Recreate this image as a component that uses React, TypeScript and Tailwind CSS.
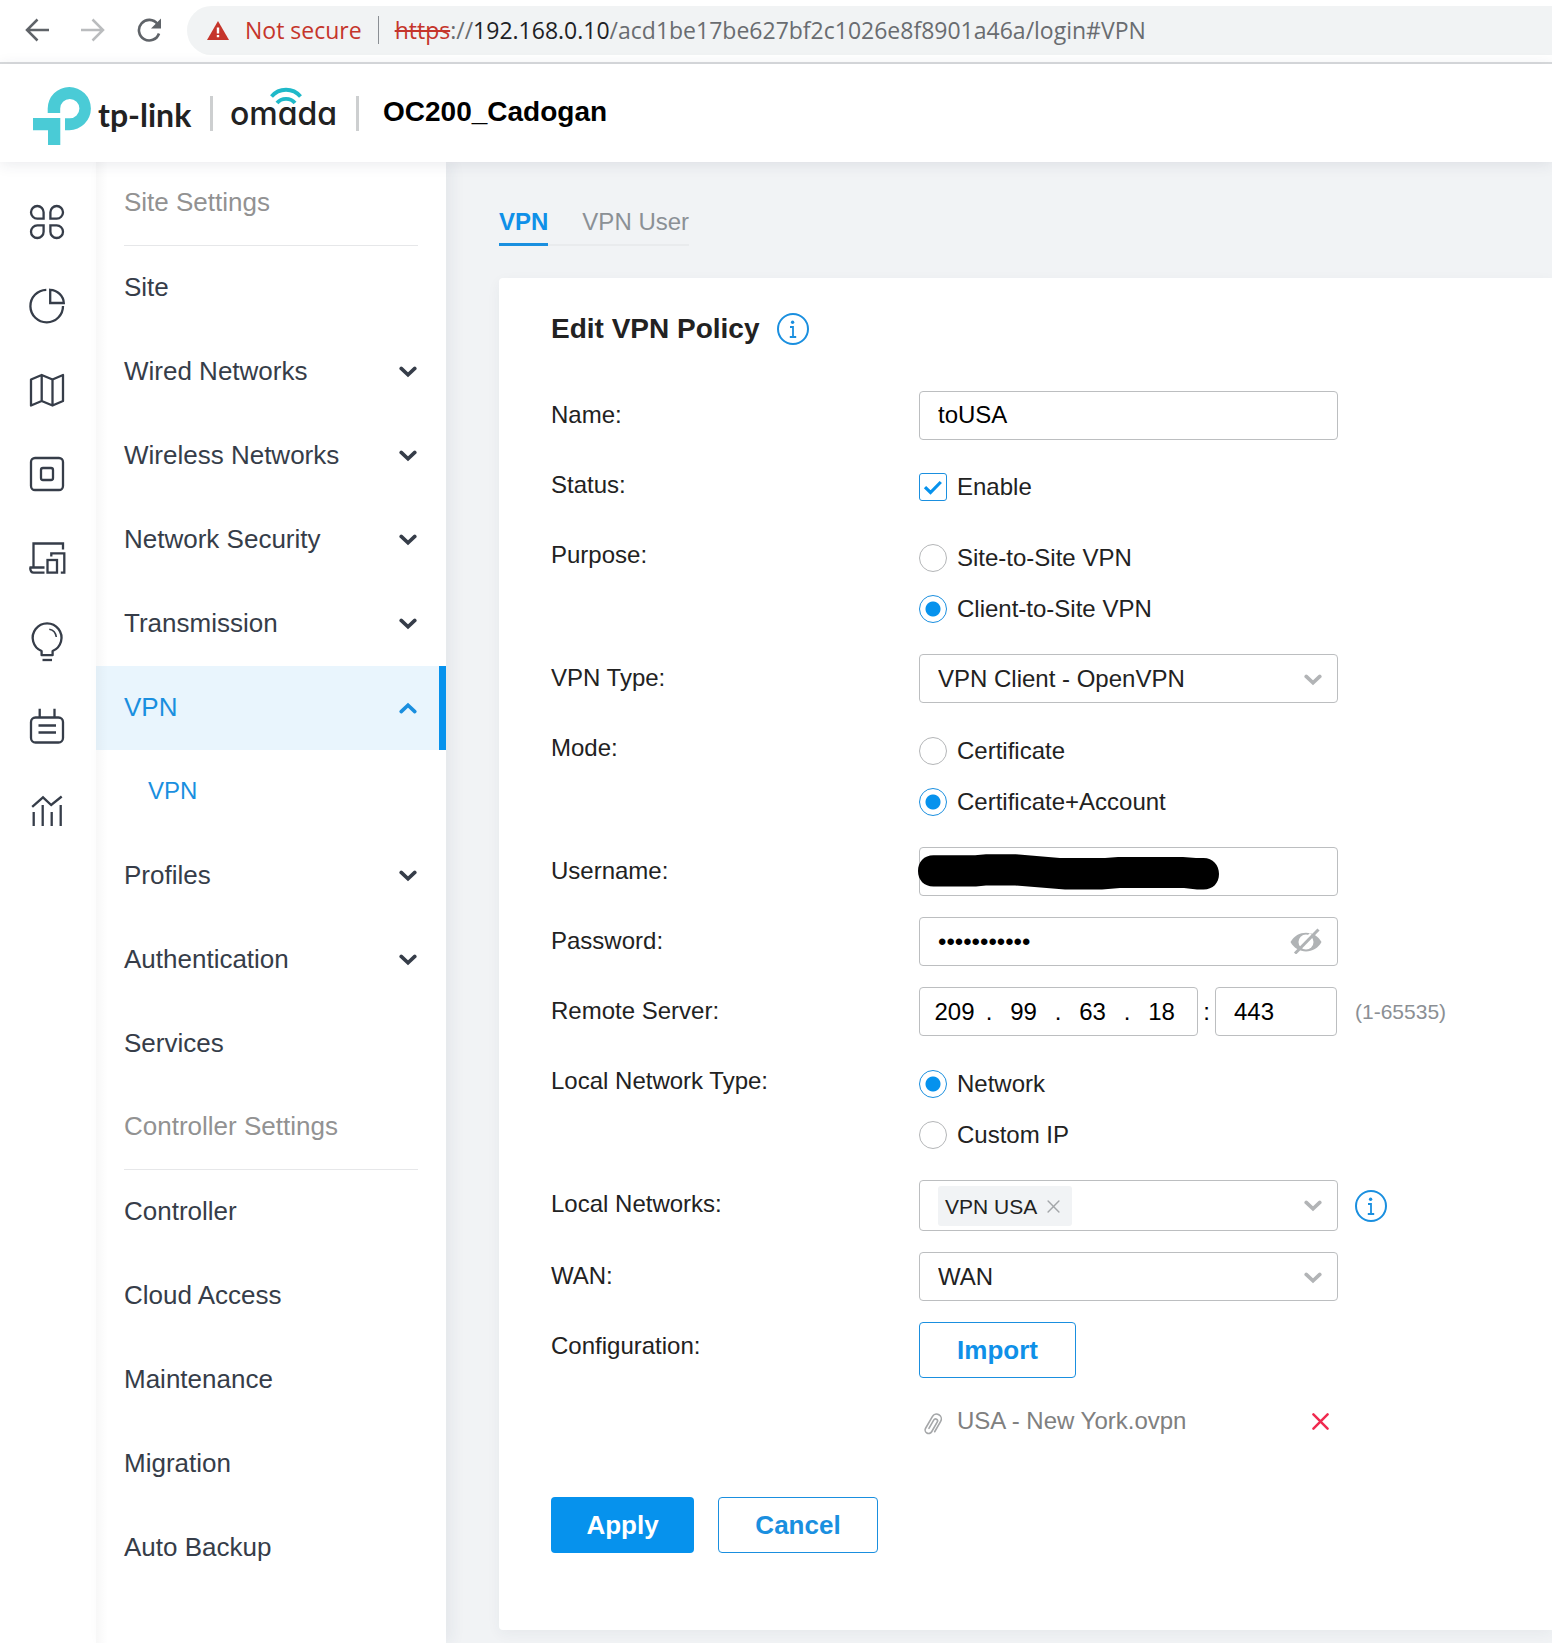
import React, { useState } from "react";

type IconProps = { className?: string };

function Chevron({ className = "" }: IconProps) {
  return (
    <svg viewBox="0 0 18 12" className={`h-3 w-[18px] ${className}`} fill="none" stroke="currentColor" strokeWidth="3.6" strokeLinecap="round" aria-hidden="true">
      <path d="M2.200 2.400 9 8.800l6.800-6.400" strokeLinejoin="miter" />
    </svg>
  );
}

function InfoIcon() {
  return (
    <svg viewBox="0 0 32 32" className="h-8 w-8" fill="none" stroke="#1a8fdf" strokeWidth="2" aria-hidden="true">
      <circle cx="16" cy="16" r="15" />
      <circle cx="15.600" cy="9.300" r="1.700" fill="#1a8fdf" stroke="none" />
      <path d="M13 14h3v9.800M12.800 24h6.400" strokeWidth="1.800" />
    </svg>
  );
}

function CloseIcon({ className = "" }: IconProps) {
  return (
    <svg viewBox="0 0 18 18" className={className} fill="none" stroke="currentColor" strokeLinecap="round" aria-hidden="true">
      <path d="M1.5 1.5l15 15M16.5 1.5l-15 15" />
    </svg>
  );
}

const petal = "M14.6 14.6H8.3A6.3 6.3 0 1 1 14.6 8.3Z";

const railIcons: { label: string; art: React.ReactNode }[] = [
  {
    label: "Dashboard",
    art: (
      <>
        <path d={petal} />
        <path d={petal} transform="translate(36 0) scale(-1 1)" />
        <path d={petal} transform="translate(0 36) scale(1 -1)" />
        <path d={petal} transform="translate(36 36) scale(-1 -1)" />
      </>
    ),
  },
  {
    label: "Statistics",
    art: (
      <>
        <path d="M17.3 1.8A16.3 16.3 0 1 0 34 18" />
        <path d="M21.2 1.8V15h13.6C34.5 8 28.500 2 21.200 1.800Z" />
      </>
    ),
  },
  {
    label: "Map",
    art: <path d="M2 7.500 12.700 3l10.800 4.500L34 3v26l-10.500 4.500L12.700 29 2 33.500ZM12.700 3v26M23.500 7.500v26" strokeLinejoin="round" />,
  },
  {
    label: "Devices",
    art: (
      <>
        <rect x="2" y="2" width="32" height="32" rx="4" />
        <rect x="12" y="12" width="12" height="12" rx="2" />
      </>
    ),
  },
  {
    label: "Clients",
    art: (
      <>
        <path d="M34 9.500V3.500H4.500v24M0.500 27.500h15M1.200 27.500c0 3.500 1 5.200 3.500 5.200h10.800" />
        <path d="M22.300 16.500v-3.200h13v19.300h-3.500" />
        <rect x="18.500" y="20" width="9.500" height="12.600" />
      </>
    ),
  },
  {
    label: "Insight",
    art: (
      <>
        <path d="M12.600 31.200V27A14.400 14.400 0 1 1 23.600 27v4.200Z" strokeLinejoin="round" />
        <path d="M13.500 36h9.500" />
        <path d="M20.300 5.200c4 .8 6.500 3.600 7 7.800" strokeWidth="1.600" />
      </>
    ),
  },
  {
    label: "Log",
    art: (
      <>
        <rect x="2" y="9.500" width="32" height="25" rx="4.500" />
        <path d="M10.700.700v8.500M25.500.700v8.500M9.500 17.500h17.500M9.500 24.500h17.500" />
      </>
    ),
  },
  {
    label: "Reports",
    art: (
      <path d="M3.200 14.800 14 5.300l8.200 7.700L32.700 4.500M4.700 20v14M13.700 13v21M22.700 20v14M31.700 13v21" />
    ),
  },
];

type Item = { label: string; expandable?: boolean; active?: boolean; child?: boolean };

const siteItems: Item[] = [
  { label: "Site" },
  { label: "Wired Networks", expandable: true },
  { label: "Wireless Networks", expandable: true },
  { label: "Network Security", expandable: true },
  { label: "Transmission", expandable: true },
  { label: "VPN", expandable: true, active: true },
  { label: "VPN", child: true },
  { label: "Profiles", expandable: true },
  { label: "Authentication", expandable: true },
  { label: "Services" },
];

const controllerItems: Item[] = [
  { label: "Controller" },
  { label: "Cloud Access" },
  { label: "Maintenance" },
  { label: "Migration" },
  { label: "Auto Backup" },
];

function BrowserBar() {
  return (
    <div className="flex h-16 items-center border-b-2 border-[#d9dbdd] bg-white pl-[25px] pb-[2px] font-['Open_Sans','Noto_Sans',sans-serif] text-[23px] whitespace-nowrap">
      <button aria-label="Back" className="mr-8 text-[#5f6368]">
        <svg viewBox="0 0 24 24" className="h-6 w-6" fill="none" stroke="currentColor" strokeWidth="2.500">
          <path d="M24 12H2.500M12.500 1.500 2 12l10.500 10.500" />
        </svg>
      </button>
      <button aria-label="Forward" className="mr-8 text-[#babcbe]">
        <svg viewBox="0 0 24 24" className="h-6 w-6" fill="none" stroke="currentColor" strokeWidth="2.500">
          <path d="M0 12h21.500M11.500 1.500 22 12 11.500 22.500" />
        </svg>
      </button>
      <button aria-label="Reload" className="mr-[26px] text-[#5f6368]">
        <svg viewBox="0 0 24 24" className="h-6 w-6" fill="none" stroke="currentColor" strokeWidth="2.600">
          <path d="M20.500 6A10.300 10.300 0 1 0 22 15.500" />
          <path d="M24 .500v10h-10Z" fill="currentColor" stroke="none" />
        </svg>
      </button>
      <div className="flex h-[49px] flex-1 items-center overflow-hidden rounded-l-full bg-[#f1f3f4] pl-5">
        <svg viewBox="0 0 22 19" className="mr-4 h-[19px] w-[22px]" aria-hidden="true">
          <path d="M11 0 22 19H0Z" fill="#c5352b" />
          <path d="M11 6.500v6M11 14v2.300" stroke="#fff" strokeWidth="2.400" />
        </svg>
        <span className="mr-4 text-[#c5352b]">Not secure</span>
        <span className="mr-4 h-7 w-px bg-[#8b8f94]" />
        <span className="text-[#696c70]">
          <span className="text-[#c5352b] line-through decoration-2">https</span>://
          <span className="text-[#202124]">192.168.0.10</span>/acd1be17be627bf2c1026e8f8901a46a/login#VPN
        </span>
      </div>
    </div>
  );
}

function Header() {
  return (
    <header className="relative z-20 flex h-[98px] items-center bg-white pl-[33px] whitespace-nowrap shadow-[0_2px_14px_rgba(40,50,80,0.10)]">
      <svg viewBox="0 0 58 58" className="mt-[6px] h-[58px] w-[58px]" fill="#4acbd6" aria-hidden="true">
        <path d="M14.700 26V21.600A21.600 21.600 0 1 1 36.300 43.200H32V31.200h4.800A9.600 9.600 0 1 0 27.200 21.600V26Z" />
        <path d="M0 31h27.300v27H15V43.200H0Z" />
      </svg>
      <span className="ml-[7px] w-[92px] pt-1 font-['Lato',sans-serif] text-[32px] leading-8 font-bold text-[#222]">tp-link</span>
      <span className="mr-[17px] ml-5 h-[35px] w-[3px] bg-[#cdcfd0]" />
      <span className="relative mt-[2px] w-[106px] font-['Inter',sans-serif] text-[32px] leading-8 font-medium text-[#222] [font-feature-settings:'cv11']">
        omada
        <svg viewBox="0 0 32 18" className="absolute -top-[11px] left-10 h-[18px] w-8" fill="none" stroke="#1fb9c9" strokeWidth="3.800" aria-hidden="true">
          <path d="M1.500 9.500C9 .500 23 .500 30.500 9.500" />
          <path d="M7 16c4.500-5.500 13.500-5.500 18 0" />
        </svg>
      </span>
      <span className="mr-6 ml-5 h-[35px] w-[3px] bg-[#cdcfd0]" />
      <h1 className="pb-[2px] text-[28px] leading-8 font-bold text-black">OC200_Cadogan</h1>
    </header>
  );
}

function Rail() {
  return (
    <nav aria-label="Main" className="flex w-24 shrink-0 flex-col items-center bg-white pt-[18px] pr-[2px]">
      {railIcons.map((icon) => (
        <a key={icon.label} href="#" aria-label={icon.label} className="flex h-[84px] w-full items-center justify-center text-[#363d49]">
          <svg viewBox="0 0 36 36" className="h-9 w-9 overflow-visible" fill="none" stroke="currentColor" strokeWidth="2.300">
            {icon.art}
          </svg>
        </a>
      ))}
    </nav>
  );
}

function MenuItem({ item }: { item: Item }) {
  if (item.child) {
    return (
      <a href="#VPN" className="flex h-[84px] items-center pb-[2px] pl-[52px] text-2xl text-[#1a8fdf]">
        {item.label}
      </a>
    );
  }
  const tone = item.active ? "border-[#0692ed] bg-[#e9f5fd] text-[#1a8fdf]" : "border-transparent text-[#363d49]";
  return (
    <a href="#" className={`flex h-[84px] items-center justify-between border-r-[7px] pr-[22px] pl-7 ${tone}`}>
      <span className="pb-[2px]">{item.label}</span>
      {item.expandable && <Chevron className={item.active ? "rotate-180" : ""} />}
    </a>
  );
}

function Sidebar() {
  const heading = "mx-7 flex h-[84px] items-center border-b border-[#e6e7e9] pb-[2px] text-[#929292]";
  return (
    <nav aria-label="Settings" className="relative z-10 w-[350px] shrink-0 bg-white text-[26px] shadow-[6px_0_14px_rgba(40,50,80,0.06)]">
      <h2 className={heading}>Site Settings</h2>
      {siteItems.map((item, i) => (
        <MenuItem key={i} item={item} />
      ))}
      <h2 className={heading}>Controller Settings</h2>
      {controllerItems.map((item) => (
        <MenuItem key={item.label} item={item} />
      ))}
      <div className="pointer-events-none absolute inset-y-0 left-0 w-3 bg-linear-to-r from-black/3 to-transparent" />
    </nav>
  );
}

const box = "h-[49px] rounded-[4px] border border-[#bcbec0] bg-white";

function Row({ label, htmlFor, children }: { label: string; htmlFor?: string; children: React.ReactNode }) {
  return (
    <div className="flex items-start">
      <label htmlFor={htmlFor} className="flex h-[49px] w-[368px] shrink-0 items-center pb-px">
        {label}
      </label>
      {children}
    </div>
  );
}

function RadioGroup({ name, options, initial }: { name: string; options: string[]; initial: string }) {
  const [value, setValue] = useState(initial);
  return (
    <div role="radiogroup" aria-label={name} className="flex h-[102px] flex-col gap-[23px] pt-[13px]">
      {options.map((option) => (
        <label key={option} className="flex h-7 items-center gap-[10px]">
          <input
            type="radio"
            name={name}
            checked={value === option}
            onChange={() => setValue(option)}
            className="h-7 w-7 appearance-none rounded-full border border-[#b4b6b8] bg-white checked:border-[#1a8fdf] checked:bg-[radial-gradient(circle,#0692ed_7px,#fff_8px)]"
          />
          {option}
        </label>
      ))}
    </div>
  );
}

function Select({ id, options }: { id: string; options: string[] }) {
  return (
    <div className="relative w-[419px]">
      <select id={id} className={`${box} w-full appearance-none pr-12 pl-[18px]`}>
        {options.map((o) => (
          <option key={o}>{o}</option>
        ))}
      </select>
      <Chevron className="pointer-events-none absolute top-5 right-4 text-[#b2b4b6]" />
    </div>
  );
}

function PolicyForm() {
  return (
    <form className="flex flex-col gap-[21px] text-2xl text-[#222]" onSubmit={(e) => e.preventDefault()}>
      <Row label="Name:" htmlFor="name">
        <input id="name" defaultValue="toUSA" className={`${box} w-[419px] px-[18px] pb-[2px] text-black`} />
      </Row>
      <Row label="Status:">
        <label className="mt-3 flex h-7 items-center gap-[10px]">
          <span className="relative h-7 w-7">
            <input type="checkbox" defaultChecked className="peer block h-7 w-7 appearance-none rounded-[3px] border border-[#1a8fdf] bg-white" />
            <svg viewBox="0 0 28 28" className="pointer-events-none absolute inset-0 hidden h-7 w-7 peer-checked:block" fill="none" stroke="#0692ed" strokeWidth="3.200" aria-hidden="true">
              <path d="M6 14.200 11.500 19.500 21.800 9" />
            </svg>
          </span>
          Enable
        </label>
      </Row>
      <Row label="Purpose:">
        <RadioGroup name="Purpose" options={["Site-to-Site VPN", "Client-to-Site VPN"]} initial="Client-to-Site VPN" />
      </Row>
      <Row label="VPN Type:" htmlFor="type">
        <Select id="type" options={["VPN Client - OpenVPN"]} />
      </Row>
      <Row label="Mode:">
        <RadioGroup name="Mode" options={["Certificate", "Certificate+Account"]} initial="Certificate+Account" />
      </Row>
      <Row label="Username:" htmlFor="username">
        <div className="relative">
          <input id="username" className={`${box} w-[419px] px-[18px] text-black`} />
          <svg viewBox="0 0 302 38" className="pointer-events-none absolute top-[6px] -left-px h-[38px] w-[302px]" aria-hidden="true">
            <path d="M15.500 2.300H57L68 1.300H98L142 5H187L200 4H265L278 5H285.500C295 5 301 12 301 21S295 36.500 285.500 36.500H279L266 35H202L184 36.500H147L97 32.500H68L58 33.500H15.500C6 33.500 0 27 0 18S6 2.300 15.500 2.300Z" />
          </svg>
        </div>
      </Row>
      <Row label="Password:" htmlFor="password">
        <div className="relative">
          <input id="password" type="password" defaultValue="secretvalue" className={`${box} w-[419px] pr-14 pl-[18px] text-black`} />
          <button type="button" aria-label="Show password" className="absolute top-[11px] right-4 text-[#b0b3b5]">
            <svg viewBox="0 0 32 26" className="h-[26px] w-8" aria-hidden="true">
              <path d="M.500 14C7 1.500 25 1.500 31.500 14 25 26.500 7 26.500.500 14Z" fill="currentColor" />
              <circle cx="16" cy="14" r="7.500" fill="#fff" />
              <path d="M10.500 16.500 21 6" stroke="#fff" strokeWidth="3" />
              <path d="M5 25.500 28.500 1.500" stroke="currentColor" strokeWidth="3" />
            </svg>
          </button>
        </div>
      </Row>
      <Row label="Remote Server:">
        <div className="flex items-center text-black">
          <div className={`${box} flex w-[279px] items-center pl-[6px]`}>
            {["209", "99", "63", "18"].map((part, i) => (
              <React.Fragment key={part}>
                {i > 0 && <span className="w-3 text-center">.</span>}
                <input aria-label={`Address part ${i + 1}`} defaultValue={part} className="w-[57px] text-center" />
              </React.Fragment>
            ))}
          </div>
          <span className="w-[17px] text-center">:</span>
          <input aria-label="Port" defaultValue="443" className={`${box} w-[122px] px-[18px]`} />
          <span className="ml-[18px] text-[21px] text-[#8b8f94]">(1-65535)</span>
        </div>
      </Row>
      <Row label="Local Network Type:">
        <RadioGroup name="Local Network Type" options={["Network", "Custom IP"]} initial="Network" />
      </Row>
      <Row label="Local Networks:">
        <div className="flex items-center gap-[17px]">
          <div className="flex h-[51px] w-[419px] items-center justify-between rounded-[4px] border border-[#bcbec0] pr-[15px] pl-[18px]">
            <span className="flex h-10 items-center gap-[10px] rounded-[3px] bg-[#f1f3f5] pt-[2px] pr-3 pl-[7px] text-[21px]">
              VPN USA
              <button type="button" aria-label="Remove VPN USA" className="text-[#a3a6a9]">
                <CloseIcon className="h-[13px] w-[13px] stroke-2" />
              </button>
            </span>
            <button type="button" aria-label="Choose networks" className="text-[#b2b4b6]">
              <Chevron />
            </button>
          </div>
          <InfoIcon />
        </div>
      </Row>
      <Row label="WAN:" htmlFor="wan">
        <Select id="wan" options={["WAN"]} />
      </Row>
      <Row label="Configuration:">
        <div className="w-[419px]">
          <button type="button" className="h-14 w-[157px] rounded-[4px] border border-[#1a8fdf] text-[26px] font-bold text-[#0f90e8]">
            Import
          </button>
          <div className="mt-[22px] flex h-[42px] items-center text-[#808080]">
            <svg viewBox="0 0 20 24" className="mt-2 mr-[14px] ml-1 h-6 w-5 overflow-visible" fill="none" stroke="#a5a7a9" strokeWidth="1.600" strokeLinecap="round" aria-hidden="true">
              <path d="M14.800 17V5a4.800 4.800 0 0 0-9.600 0V18.500a3.500 3.500 0 0 0 7 0V7.200a2 2 0 0 0-4 0V17" transform="rotate(30 10 12)" />
            </svg>
            <span className="flex-1">USA - New York.ovpn</span>
            <button type="button" aria-label="Remove file" className="mr-[9px] text-[#f0294f]">
              <CloseIcon className="h-[17px] w-[17px] stroke-[2.600]" />
            </button>
          </div>
        </div>
      </Row>
      <div className="mt-[34px] flex gap-6 text-[26px] font-bold">
        <button type="submit" className="h-14 w-[143px] rounded-[4px] bg-[#0692ed] text-white">
          Apply
        </button>
        <button type="button" className="h-14 w-40 rounded-[4px] border border-[#1a8fdf] text-[#1a8fdf]">
          Cancel
        </button>
      </div>
    </form>
  );
}

export default function App() {
  return (
    <div className="flex min-h-screen flex-col bg-[#f1f3f5] font-['Liberation_Sans',Arial,sans-serif]">
      <BrowserBar />
      <Header />
      <div className="flex flex-1">
        <Rail />
        <Sidebar />
        <main className="min-w-0 flex-1 pl-[53px]">
          <div className="flex pt-10 text-2xl">
            <a href="#VPN" className="h-11 border-b-[3px] border-[#1a8fdf] pt-1 font-bold text-[#0f90e8]">
              VPN
            </a>
            <a href="#VPNUser" className="h-11 border-b-2 border-[#e9ebed] pt-1 pl-[34px] text-[#8b9095]">
              VPN User
            </a>
          </div>
          <section className="mt-8 rounded-l-[4px] bg-white pt-[35px] pb-[77px] pl-[52px] shadow-[0_4px_14px_rgba(40,50,80,0.05)]">
            <h2 className="mb-[46px] flex h-8 items-center gap-[17px] text-[28px] font-bold text-[#222]">
              Edit VPN Policy
              <InfoIcon />
            </h2>
            <PolicyForm />
          </section>
        </main>
      </div>
    </div>
  );
}
